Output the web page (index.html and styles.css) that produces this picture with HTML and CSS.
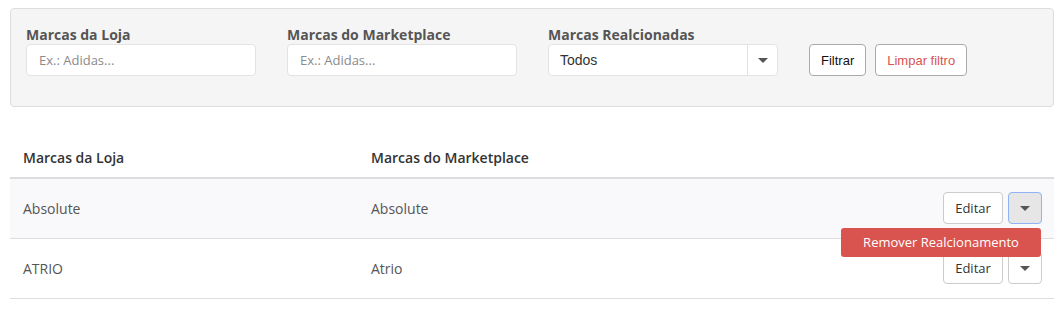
FILE: index.html
```html
<!DOCTYPE html>
<html lang="pt-BR">
<head>
    <meta charset="UTF-8">
    <title>Relacionamento de Marcas</title>
    <link rel="stylesheet" href="styles.css">
</head>
<body>
    <div class="page">
        <form class="filter-panel">
            <div class="form-group">
                <label>Marcas da Loja</label>
                <input type="text" class="form-control" placeholder="Ex.: Adidas...">
            </div>
            <div class="form-group">
                <label>Marcas do Marketplace</label>
                <input type="text" class="form-control" placeholder="Ex.: Adidas...">
            </div>
            <div class="form-group">
                <label>Marcas Realcionadas</label>
                <div class="select-box">
                    <span class="select-value">Todos</span>
                    <span class="select-arrow"><span class="caret"></span></span>
                </div>
            </div>
            <div class="filter-actions">
                <button type="button" class="btn-filter">Filtrar</button>
                <button type="button" class="btn-filter btn-clear">Limpar filtro</button>
            </div>
        </form>

        <table class="brand-table">
            <thead>
                <tr>
                    <th class="col-store">Marcas da Loja</th>
                    <th class="col-market">Marcas do Marketplace</th>
                    <th></th>
                </tr>
            </thead>
            <tbody>
                <tr class="striped">
                    <td>Absolute</td>
                    <td>Absolute</td>
                    <td class="actions">
                        <div class="btn-group">
                            <button class="btn">Editar</button>
                            <button class="btn btn-toggle active"><span class="caret"></span></button>
                            <div class="dropdown-menu">Remover Realcionamento</div>
                        </div>
                    </td>
                </tr>
                <tr>
                    <td>ATRIO</td>
                    <td>Atrio</td>
                    <td class="actions">
                        <div class="btn-group">
                            <button class="btn">Editar</button>
                            <button class="btn btn-toggle"><span class="caret"></span></button>
                        </div>
                    </td>
                </tr>
            </tbody>
        </table>
    </div>
</body>
</html>
```

FILE: styles.css
```css
body {
    margin: 0;
    padding: 8px 10px;
    background: #fff;
    color: #555;
    font-family: 'Open Sans', sans-serif;
    font-size: 14px;
}

/* Filter panel */
.filter-panel {
    display: flex;
    align-items: flex-start;
    background: #f5f5f5;
    border: 1px solid #ddd;
    border-radius: 4px;
    padding: 16px 15px 30px;
    margin: 0 0 33px;
}

.form-group {
    display: flex;
    flex-direction: column;
    width: 230px;
    margin-right: 31px;
}

.form-group label {
    font-weight: 700;
    font-size: 14px;
    color: #555;
    line-height: 19px;
}

.form-control {
    box-sizing: border-box;
    height: 32px;
    border: 1px solid #e3e3e3;
    border-radius: 4px;
    padding: 0 12px;
    font-family: 'Open Sans', sans-serif;
    font-size: 13px;
    color: #555;
    background: #fff;
}

.form-control::placeholder {
    color: #8a8a8a;
}

.select-box {
    box-sizing: border-box;
    display: flex;
    height: 32px;
    border: 1px solid #e3e3e3;
    border-radius: 4px;
    background: #fff;
}

.select-value {
    flex: 1;
    padding-left: 11px;
    line-height: 30px;
    font-family: 'Liberation Sans', Arial, sans-serif;
    font-size: 14px;
    color: #333;
}

.select-arrow {
    width: 29px;
    border-left: 1px solid #e3e3e3;
    display: flex;
    align-items: center;
    justify-content: center;
}

.filter-actions {
    display: flex;
    gap: 9px;
    margin-top: 19px;
}

.btn-filter {
    box-sizing: border-box;
    height: 32px;
    padding: 0 11px;
    background: #fff;
    border: 1px solid #aaa;
    border-radius: 4px;
    font-family: 'Liberation Sans', Arial, sans-serif;
    font-size: 13px;
    color: #111;
}

.btn-clear {
    padding: 0 11px;
    color: #d9534f;
}

.caret {
    display: inline-block;
    width: 0;
    height: 0;
    border-left: 5px solid transparent;
    border-right: 5px solid transparent;
    border-top: 5px solid #555;
}

/* Table */
.brand-table {
    width: 100%;
    border-collapse: collapse;
    table-layout: fixed;
}

.brand-table th {
    text-align: left;
    font-weight: 600;
    color: #333;
    padding: 8px 13px 9px;
    line-height: 20px;
    border-bottom: 2px solid #ddd;
}

.brand-table .col-store {
    width: 322px;
}

.brand-table .col-market {
    width: 322px;
}

.brand-table td {
    height: 59px;
    padding: 0 13px;
    vertical-align: middle;
    border-top: 1px solid #ddd;
    border-bottom: 1px solid #ddd;
}

.brand-table tr.striped td {
    background: #f9f9fb;
}

.brand-table td.actions {
    text-align: right;
    padding-right: 12px;
}

.btn-group {
    position: relative;
    display: inline-flex;
    gap: 5px;
    margin-top: -1px;
}

.btn {
    box-sizing: border-box;
    height: 32px;
    width: 60px;
    padding: 0;
    background: #fff;
    border: 1px solid #ccc;
    border-radius: 4px;
    font-family: 'Open Sans', sans-serif;
    font-size: 13px;
    color: #333;
}

.btn-toggle {
    width: 34px;
    display: flex;
    align-items: center;
    justify-content: center;
}

.btn-toggle.active {
    background: #e6e6e6;
    border-color: #8eb4f5;
}

.dropdown-menu {
    position: absolute;
    top: 36px;
    right: 1px;
    width: 200px;
    height: 29px;
    line-height: 29px;
    background: #d9534f;
    color: #fff;
    border-radius: 3px;
    text-align: center;
    font-size: 13px;
    z-index: 2;
}
```
